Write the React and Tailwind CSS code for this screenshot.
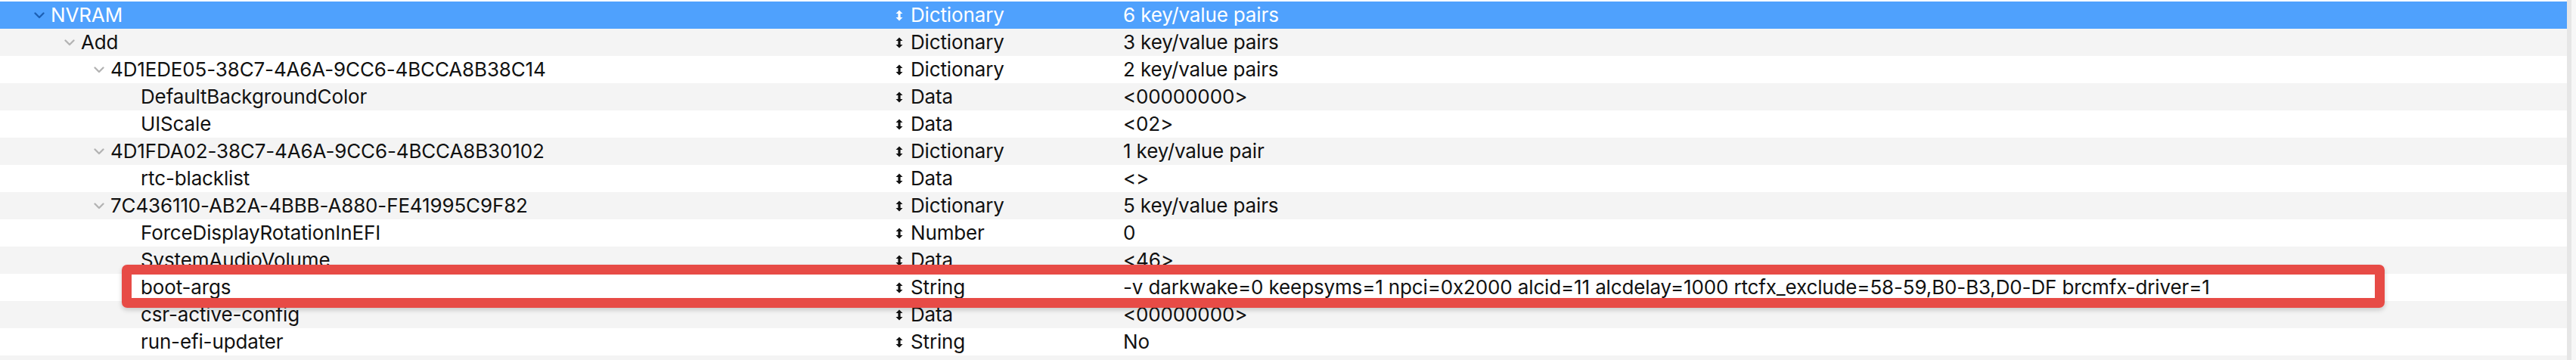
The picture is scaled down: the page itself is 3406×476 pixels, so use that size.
const rows = [
  { key: "NVRAM", level: 0, open: true, type: "Dictionary", value: "6 key/value pairs", selected: true },
  { key: "Add", level: 1, open: true, type: "Dictionary", value: "3 key/value pairs" },
  { key: "4D1EDE05-38C7-4A6A-9CC6-4BCCA8B38C14", level: 2, open: true, type: "Dictionary", value: "2 key/value pairs" },
  { key: "DefaultBackgroundColor", level: 3, type: "Data", value: "<00000000>" },
  { key: "UIScale", level: 3, type: "Data", value: "<02>" },
  { key: "4D1FDA02-38C7-4A6A-9CC6-4BCCA8B30102", level: 2, open: true, type: "Dictionary", value: "1 key/value pair" },
  { key: "rtc-blacklist", level: 3, type: "Data", value: "<>" },
  { key: "7C436110-AB2A-4BBB-A880-FE41995C9F82", level: 2, open: true, type: "Dictionary", value: "5 key/value pairs" },
  { key: "ForceDisplayRotationInEFI", level: 3, type: "Number", value: "0" },
  { key: "SystemAudioVolume", level: 3, type: "Data", value: "<46>" },
  {
    key: "boot-args",
    level: 3,
    type: "String",
    value: "-v darkwake=0 keepsyms=1 npci=0x2000 alcid=11 alcdelay=1000 rtcfx_exclude=58-59,B0-B3,D0-DF brcmfx-driver=1",
  },
  { key: "csr-active-config", level: 3, type: "Data", value: "<00000000>" },
  { key: "run-efi-updater", level: 3, type: "String", value: "No" },
];

const indent = ["pl-[45px]", "pl-[85px]", "pl-[124px]", "pl-[164px]"];

const Chevron = ({ selected }) => (
  <svg width="14" height="9" viewBox="0 0 14 9" className="block">
    <path
      d="M1.5 1.5 L7 7 L12.5 1.5"
      fill="none"
      stroke={selected ? "#1c5fb3" : "#b3b3b3"}
      strokeWidth="2.3"
      strokeLinecap="round"
      strokeLinejoin="round"
    />
  </svg>
);

// small up/down popup arrows in the type column
const UpDown = ({ selected }) => (
  <svg width="10" height="15" viewBox="0 0 10 15" className="block">
    <path
      d="M5 0.5 L9.5 5 H6.6 V10 H9.5 L5 14.5 L0.5 10 H3.4 V5 H0.5 Z"
      fill={selected ? "#ffffff" : "#111111"}
    />
  </svg>
);

const Row = ({ row, index }) => {
  const bg = row.selected ? "bg-[#4fa1fd]" : index % 2 === 1 ? "bg-[#f4f4f4]" : "bg-white";
  const text = row.selected ? "text-white" : "text-[#111111]";
  return (
    <div className={`flex h-[36px] items-center ${bg} ${text}`}>
      <div className={`flex w-[1170px] shrink-0 items-center ${indent[row.level]}`}>
        <div className="flex w-[22px] shrink-0 items-center">
          {row.open && <Chevron selected={row.selected} />}
        </div>
        <span className="whitespace-nowrap">{row.key}</span>
      </div>
      <div className="flex w-[315px] shrink-0 items-center gap-[10px] pl-[14px]">
        <UpDown selected={row.selected} />
        <span className="whitespace-nowrap">{row.type}</span>
      </div>
      <div className="flex-1 whitespace-nowrap">{row.value}</div>
    </div>
  );
};

export default function App() {
  return (
    <div
      className="relative flex h-[476px] w-[3406px] overflow-hidden bg-white text-[26px] leading-[36px] tracking-[-0.14px]"
      style={{ fontFamily: "Inter, 'Liberation Sans', sans-serif" }}
    >
      <div className="flex-1 pt-[2px]">
        {rows.map((row, i) => (
          <Row key={row.key} row={row} index={i} />
        ))}
        <div className="h-[36px] bg-[#f4f4f4]" />
      </div>
      <div className="w-[6px] bg-[#e6e6e6]" />
      <div className="w-[6px] bg-[#f7f7f7]" />

      {/* red annotation box around boot-args */}
      <div className="absolute left-[161px] top-[350px] h-[57px] w-[2992px] rounded-[7px] border-[13px] border-[#e74b46] shadow-[0_3px_6px_rgba(0,0,0,0.18)]" />
    </div>
  );
}
